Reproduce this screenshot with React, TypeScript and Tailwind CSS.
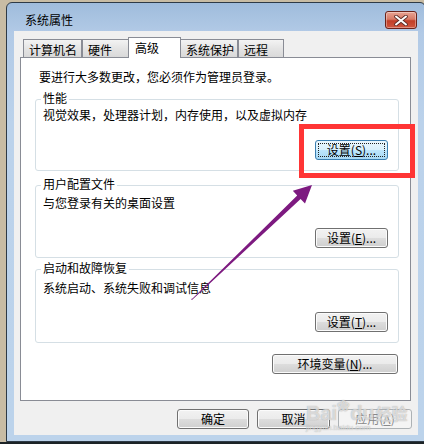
import type { ReactNode } from 'react';

function WinButton({
  children,
  className = '',
  focused = false,
  disabled = false,
}: {
  children: ReactNode;
  className?: string;
  focused?: boolean;
  disabled?: boolean;
}) {
  if (disabled) {
    return (
      <div
        className={`flex h-[20px] items-center justify-center rounded-[3px] border border-[#adb2b5] bg-[#f4f4f4] text-[12px] leading-[12px] text-[#8a8a8a] ${className}`}
      >
        {children}
      </div>
    );
  }
  if (focused) {
    return (
      <div
        className={`flex h-[20px] rounded-[3px] border border-[#3c7fb1] bg-[linear-gradient(#eaf6fd_0%,#d9f0fc_49%,#bee6fd_50%,#a7d9f5_100%)] p-[2px] text-[12px] leading-[12px] text-black ${className}`}
      >
        <span className="flex flex-1 items-center justify-center border border-dotted border-[#222]">
          {children}
        </span>
      </div>
    );
  }
  return (
    <div
      className={`flex h-[20px] items-center justify-center rounded-[3px] border border-[#707070] bg-[linear-gradient(#f2f2f2_0%,#ebebeb_49%,#dddddd_50%,#cfcfcf_100%)] text-[12px] leading-[12px] text-black shadow-[inset_0_0_0_1px_#fbfbfb] ${className}`}
    >
      {children}
    </div>
  );
}

function Group({
  title,
  desc,
  button,
  className,
  descClass,
  buttonClass,
}: {
  title: string;
  desc: string;
  button: ReactNode;
  className: string;
  descClass: string;
  buttonClass: string;
}) {
  return (
    <div className={`ml-[14px] w-[364px] rounded-[3px] border border-[#d5dfe5] ${className}`}>
      <div className="-mt-[8px] ml-[5px] w-fit bg-white px-[2px] leading-[12px]">{title}</div>
      <div className={`pl-[7px] leading-[12px] ${descClass}`}>{desc}</div>
      <div className={`flex justify-end pr-[10px] ${buttonClass}`}>{button}</div>
    </div>
  );
}

const tabs = [
  { label: '计算机名', w: 'w-[59px]' },
  { label: '硬件', w: 'w-[47px]' },
  { label: '高级', w: 'w-[53px]', active: true },
  { label: '系统保护', w: 'w-[58px]' },
  { label: '远程', w: 'w-[46px]' },
];

export default function App() {
  return (
    <div className="relative flex h-[444px] w-[424px] flex-col overflow-hidden bg-[#c8bca4] font-['Noto_Sans_CJK_SC',sans-serif] text-[12px] text-black">
      {/* window */}
      <div className="ml-[6px] mt-[2px] flex h-[440px] w-[420px] shrink-0 flex-col rounded-t-[6px] border border-[#2e3a46] bg-[linear-gradient(#9fbcdc_0px,#b2cae6_30px,#bbd2eb_120px,#bcd3eb_100%)] px-[7px] pb-[6px]">
        <div className="flex h-[28px] items-start justify-between">
          <span className="ml-[11px] mt-[11px] leading-[12px] text-[12px]">系统属性</span>
          <div className="mr-[1px] mt-[8px] flex h-[18px] w-[32px] items-center justify-center rounded-[3px] border border-[#6b2219] bg-[linear-gradient(#e8a493_0%,#d77a66_45%,#c13e27_55%,#d0573f_100%)] shadow-[inset_0_0_0_1px_rgba(255,255,255,0.35)]">
            <svg width="14" height="11" viewBox="0 0 14 11">
              <path d="M2 1.5 L12 9.5 M12 1.5 L2 9.5" stroke="#5a2b25" strokeWidth="3.6" strokeLinecap="round" />
              <path d="M2 1.5 L12 9.5 M12 1.5 L2 9.5" stroke="#ffffff" strokeWidth="2" strokeLinecap="round" />
            </svg>
          </div>
        </div>

        {/* client */}
        <div className="flex h-[404px] flex-col bg-[#f0f0f0] px-[6px] pt-[6px]">
          <div className="relative z-10 ml-[3px] flex h-[20px] items-end">
            {tabs.map((t, i) =>
              t.active ? (
                <div
                  key={t.label}
                  className={`-mb-px -ml-px h-[21px] border border-b-0 border-[#898c95] bg-white pl-[6px] pt-[4px] leading-[12px] ${t.w}`}
                >
                  {t.label}
                </div>
              ) : (
                <div
                  key={t.label}
                  className={`h-[18px] border border-b-0 border-[#898c95] bg-[linear-gradient(#f3f3f3,#e4e4e4_50%,#d9d9d9)] pl-[5px] pt-[4px] leading-[12px] ${i === 3 ? '-ml-px' : ''} ${t.w}`}
                >
                  {t.label}
                </div>
              ),
            )}
          </div>

          <div className="flex h-[344px] w-[391px] flex-col border border-[#898c95] bg-white">
            <div className="mt-[13px] pl-[18px] leading-[12px]">要进行大多数更改，您必须作为管理员登录。</div>

            <Group
              title="性能"
              desc="视觉效果，处理器计划，内存使用，以及虚拟内存"
              className="mt-[16px] h-[72px]"
              descClass="mt-[5px]"
              buttonClass="mt-[19px]"
              button={
                <WinButton focused className="w-[73px]">
                  设置(<span className="underline">S</span>)...
                </WinButton>
              }
            />
            <Group
              title="用户配置文件"
              desc="与您登录有关的桌面设置"
              className="mt-[14px] h-[73px]"
              descClass="mt-[7px]"
              buttonClass="mt-[19px]"
              button={
                <WinButton className="w-[73px]">
                  设置(<span className="underline">E</span>)...
                </WinButton>
              }
            />
            <Group
              title="启动和故障恢复"
              desc="系统启动、系统失败和调试信息"
              className="mt-[11px] h-[74px]"
              descClass="mt-[8px]"
              buttonClass="mt-[18px]"
              button={
                <WinButton className="w-[73px]">
                  设置(<span className="underline">T</span>)...
                </WinButton>
              }
            />

            <div className="mt-[11px] flex justify-end pr-[12px]">
              <WinButton className="w-[126px]">
                环境变量(<span className="underline">N</span>)...
              </WinButton>
            </div>
          </div>

          <div className="mt-[8px] flex justify-end gap-[8px]">
            <WinButton className="w-[72px]">确定</WinButton>
            <WinButton className="w-[73px]">取消</WinButton>
            <WinButton disabled className="w-[74px]">
              应用(<span className="underline">A</span>)
            </WinButton>
          </div>
        </div>
      </div>
      <div className="h-[2px] w-full bg-[#1c2326]" />

      {/* annotations */}
      <div className="pointer-events-none absolute left-[299px] top-[124px] h-[54px] w-[116px] border-[5px] border-[#ff3535]" />
      <svg className="pointer-events-none absolute left-0 top-0" width="424" height="444">
        <polygon
          points="191,299 192.5,298.5 297.2,195.5 292.8,190.8 312,185 305,203.5 300.6,199.1 192,300"
          fill="#7d1a80"
        />
      </svg>

      {/* watermark */}
      <div className="pointer-events-none absolute left-[306px] top-[396px] flex flex-col text-white/60 [text-shadow:0_0_1px_rgba(120,120,120,0.7)]">
        <div className="flex items-end font-['Liberation_Sans',sans-serif] text-[20px] font-bold leading-[20px]">
          <span>Bai</span>
          <span className="mb-[7px] text-[15px]">❀</span>
          <span>du</span>
          <span className="ml-[1px] font-['Noto_Sans_CJK_SC',sans-serif] text-[16px]">经验</span>
        </div>
        <div className="font-['Liberation_Sans',sans-serif] text-[8px] leading-[9px]">jingyan.baidu.com</div>
      </div>
    </div>
  );
}
